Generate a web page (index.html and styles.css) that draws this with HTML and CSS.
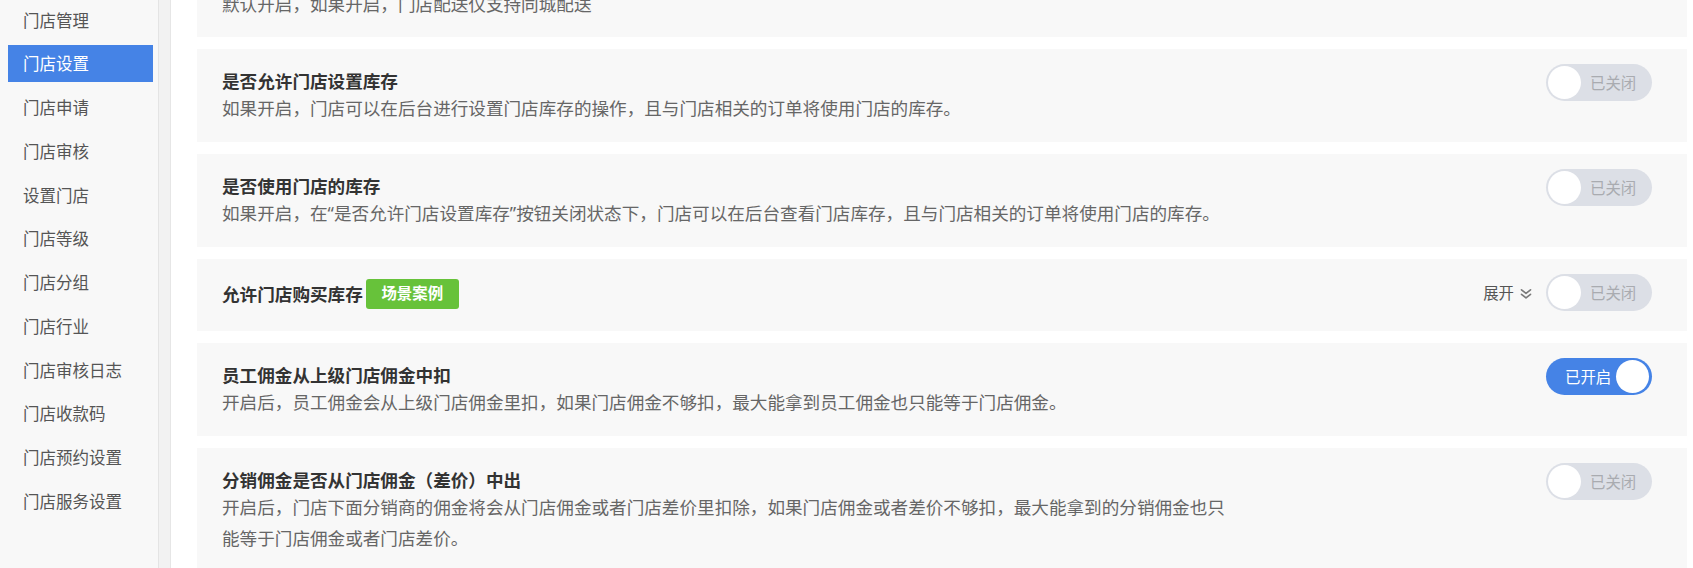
FILE: index.html
```html
<!DOCTYPE html>
<html lang="zh-CN">
<head>
<meta charset="utf-8">
<title>门店设置</title>
<link rel="stylesheet" href="styles.css">
</head>
<body>
<div class="page">
  <aside class="sidebar">
    <div class="nav-item">门店管理</div>
    <div class="nav-item active">门店设置</div>
    <div class="nav-item">门店申请</div>
    <div class="nav-item">门店审核</div>
    <div class="nav-item">设置门店</div>
    <div class="nav-item">门店等级</div>
    <div class="nav-item">门店分组</div>
    <div class="nav-item">门店行业</div>
    <div class="nav-item">门店审核日志</div>
    <div class="nav-item">门店收款码</div>
    <div class="nav-item">门店预约设置</div>
    <div class="nav-item">门店服务设置</div>
  </aside>
  <div class="gutter"></div>
  <main class="main">
    <section class="card card-first">
      <div class="card-body">
        <div class="desc">默认开启，如果开启，门店配送仅支持同城配送</div>
      </div>
    </section>

    <section class="card">
      <div class="card-body">
        <div class="title">是否允许门店设置库存</div>
        <div class="desc">如果开启，门店可以在后台进行设置门店库存的操作，且与门店相关的订单将使用门店的库存。</div>
      </div>
      <div class="ctrl">
        <div class="toggle"><span class="knob"></span><span class="tlabel">已关闭</span></div>
      </div>
    </section>

    <section class="card">
      <div class="card-body">
        <div class="title">是否使用门店的库存</div>
        <div class="desc">如果开启，在“是否允许门店设置库存”按钮关闭状态下，门店可以在后台查看门店库存，且与门店相关的订单将使用门店的库存。</div>
      </div>
      <div class="ctrl">
        <div class="toggle"><span class="knob"></span><span class="tlabel">已关闭</span></div>
      </div>
    </section>

    <section class="card card-compact">
      <div class="card-body">
        <div class="title-row">
          <div class="title">允许门店购买库存</div>
          <span class="badge">场景案例</span>
        </div>
      </div>
      <div class="ctrl">
        <span class="expand">展开<svg class="chev" width="12" height="12" viewBox="0 0 12 12" fill="none" stroke="#7a7a7a" stroke-width="1.7" stroke-linecap="round" stroke-linejoin="round"><polyline points="1.5,1.8 6,5.3 10.5,1.8"/><polyline points="1.5,6.3 6,9.8 10.5,6.3"/></svg></span>
        <div class="toggle"><span class="knob"></span><span class="tlabel">已关闭</span></div>
      </div>
    </section>

    <section class="card">
      <div class="card-body">
        <div class="title">员工佣金从上级门店佣金中扣</div>
        <div class="desc">开启后，员工佣金会从上级门店佣金里扣，如果门店佣金不够扣，最大能拿到员工佣金也只能等于门店佣金。</div>
      </div>
      <div class="ctrl">
        <div class="toggle on"><span class="knob"></span><span class="tlabel">已开启</span></div>
      </div>
    </section>

    <section class="card">
      <div class="card-body">
        <div class="title">分销佣金是否从门店佣金（差价）中出</div>
        <div class="desc">开启后，门店下面分销商的佣金将会从门店佣金或者门店差价里扣除，如果门店佣金或者差价不够扣，最大能拿到的分销佣金也只能等于门店佣金或者门店差价。</div>
      </div>
      <div class="ctrl">
        <div class="toggle"><span class="knob"></span><span class="tlabel">已关闭</span></div>
      </div>
    </section>
  </main>
</div>
</body>
</html>
```
FILE: styles.css
```css
* { box-sizing: border-box; }
html, body {
  margin: 0;
  padding: 0;
  width: 1693px;
  height: 568px;
  overflow: hidden;
  background: #ffffff;
  font-family: "Noto Sans", "Noto Sans CJK SC", "Liberation Sans", sans-serif;
}
.page {
  display: flex;
  height: 568px;
}
.sidebar {
  width: 159px;
  flex: none;
  background: #f8f8f8;
  border-right: 1px solid #e4e4e4;
  padding-top: 1.5px;
}
.nav-item {
  margin-left: 8px;
  width: 145px;
  height: 37px;
  line-height: 37px;
  padding-left: 15px;
  margin-bottom: 6.77px;
  font-size: 16.5px;
  color: #555555;
  white-space: nowrap;
}
.nav-item.active {
  background: #4583e6;
  color: #ffffff;
}
.gutter {
  width: 12px;
  flex: none;
  background: #f2f2f2;
  border-right: 1px solid #e6e6e6;
}
.main {
  flex: 1;
  padding: 0 6px 0 26px;
}
.card {
  display: flex;
  align-items: flex-start;
  background: #f8f8f8;
  padding: 20px 35px 18px 25px;
  margin-bottom: 12px;
}
.card-first {
  margin-top: -12px;
  padding-top: 0.5px;
  padding-bottom: 17.5px;
}
.card-compact {
  padding-bottom: 20px;
}
.card-body {
  flex: 1;
  min-width: 0;
}
.title {
  font-size: 17.6px;
  line-height: 24px;
  font-weight: 700;
  color: #333333;
  white-space: nowrap;
}
.desc {
  max-width: 1012px;
  font-size: 17.6px;
  line-height: 31px;
  color: #666666;
}
.title-row {
  display: flex;
  align-items: center;
  height: 30px;
}
.badge {
  margin-left: 3px;
  width: 93px;
  height: 30px;
  line-height: 30px;
  text-align: center;
  border-radius: 3px;
  background: #67c23a;
  color: #ffffff;
  font-size: 15.4px;
  font-weight: 700;
}
.ctrl {
  display: flex;
  align-items: center;
  gap: 14px;
  margin-top: -5px;
}
.expand {
  display: flex;
  align-items: center;
  gap: 6px;
  font-size: 15.4px;
  color: #555555;
}
.chev { display: block; margin-top: 3px; }
.toggle {
  width: 106px;
  height: 37px;
  border-radius: 19px;
  background: #dcdfe6;
  padding: 2px;
  display: flex;
  align-items: center;
}
.knob {
  width: 33px;
  height: 33px;
  border-radius: 50%;
  background: #ffffff;
  flex: none;
}
.tlabel {
  margin-left: 9px;
  font-size: 15.4px;
  color: #a9abb0;
  white-space: nowrap;
}
.toggle.on {
  background: #4583e6;
  flex-direction: row-reverse;
  padding: 2px 3px 2px 19px;
}
.toggle.on .tlabel {
  margin-left: 0;
  margin-right: auto;
  color: #ffffff;
}
```
